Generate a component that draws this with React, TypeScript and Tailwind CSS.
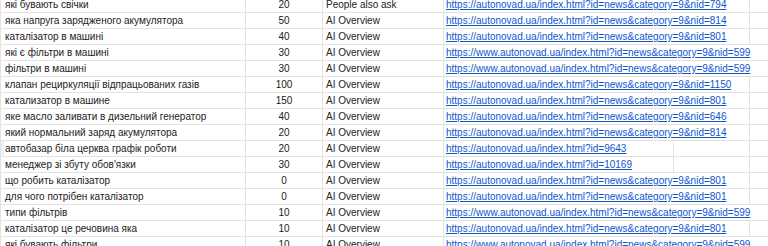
import React from 'react';

type Row = {
  query: string;
  volume: number;
  kind: string;
  url: string;
  // how far the link spills: 0 = fits in its cell, 1 = into the next column, 2 = past it
  spill: 0 | 1 | 2;
  selected?: boolean;
};

const base = 'https://autonovad.ua/index.html?id=news&category=9&nid=';
const www = 'https://www.autonovad.ua/index.html?id=news&category=9&nid=';

const rows: Row[] = [
  { query: 'які бувають свічки', volume: 20, kind: 'People also ask', url: base + '794', spill: 1 },
  { query: 'яка напруга зарядженого акумулятора', volume: 50, kind: 'AI Overview', url: base + '814', spill: 1 },
  { query: 'каталізатор в машині', volume: 40, kind: 'AI Overview', url: base + '801', spill: 1 },
  { query: 'які є фільтри в машині', volume: 30, kind: 'AI Overview', url: www + '599', spill: 2 },
  { query: 'фільтри в машині', volume: 30, kind: 'AI Overview', url: www + '599', spill: 2 },
  { query: 'клапан рециркуляції відпрацьованих газів', volume: 100, kind: 'AI Overview', url: base + '1150', spill: 1 },
  { query: 'катализатор в машине', volume: 150, kind: 'AI Overview', url: base + '801', spill: 1 },
  { query: 'яке масло заливати в дизельний генератор', volume: 40, kind: 'AI Overview', url: base + '646', spill: 1 },
  { query: 'який нормальний заряд акумулятора', volume: 20, kind: 'AI Overview', url: base + '814', spill: 1 },
  { query: 'автобазар біла церква графік роботи', volume: 20, kind: 'AI Overview', url: 'https://autonovad.ua/index.html?id=9643', spill: 0, selected: true },
  { query: "менеджер зі збуту обов'язки", volume: 30, kind: 'AI Overview', url: 'https://autonovad.ua/index.html?id=10169', spill: 0 },
  { query: 'що робить каталізатор', volume: 0, kind: 'AI Overview', url: base + '801', spill: 1 },
  { query: 'для чого потрібен каталізатор', volume: 0, kind: 'AI Overview', url: base + '801', spill: 1 },
  { query: 'типи фільтрів', volume: 10, kind: 'AI Overview', url: www + '599', spill: 2 },
  { query: 'каталізатор це речовина яка', volume: 10, kind: 'AI Overview', url: base + '801', spill: 1 },
  { query: 'які бувають фільтри', volume: 10, kind: 'AI Overview', url: www + '599', spill: 2 },
];

const cell = 'h-full flex items-end pb-[1px] whitespace-nowrap border-[#e2e2e2]';

function SheetRow({ row }: { row: Row }) {
  return (
    <div className="flex h-[16px] border-b border-[#e2e2e2] leading-[12px]">
      <div className={`${cell} relative w-[246px] shrink-0 border-l border-r pl-[4px] overflow-hidden`}>
        {row.selected && <div className="absolute left-0 top-0 bottom-0 w-[3px] bg-[#e8f0fe]" />}
        <span className="relative">{row.query}</span>
      </div>
      <div className={`${cell} w-[77px] shrink-0 border-r justify-center`}>{row.volume}</div>
      <div className={`${cell} w-[121px] shrink-0 border-r pl-[3px] overflow-hidden`}>{row.kind}</div>
      <div className={`${cell} w-[230px] shrink-0 pl-[2px] ${row.spill === 0 ? 'border-r' : 'border-r border-r-transparent'}`}>
        <a href="#" className="text-[#1155cc] underline underline-offset-[1px]">
          {row.url}
        </a>
      </div>
      <div className={`${cell} w-[76px] shrink-0 ${row.spill === 2 ? 'border-r border-r-transparent' : 'border-r'}`} />
      <div className={`${cell} flex-1`} />
    </div>
  );
}

export default function App() {
  return (
    <div className="w-[768px] h-[246px] overflow-hidden bg-white text-[10px] text-[#222222] font-['Liberation_Sans',Arial,sans-serif]">
      <div className="mt-[-3px]">
        {rows.map((row, i) => (
          <SheetRow key={i} row={row} />
        ))}
      </div>
    </div>
  );
}
